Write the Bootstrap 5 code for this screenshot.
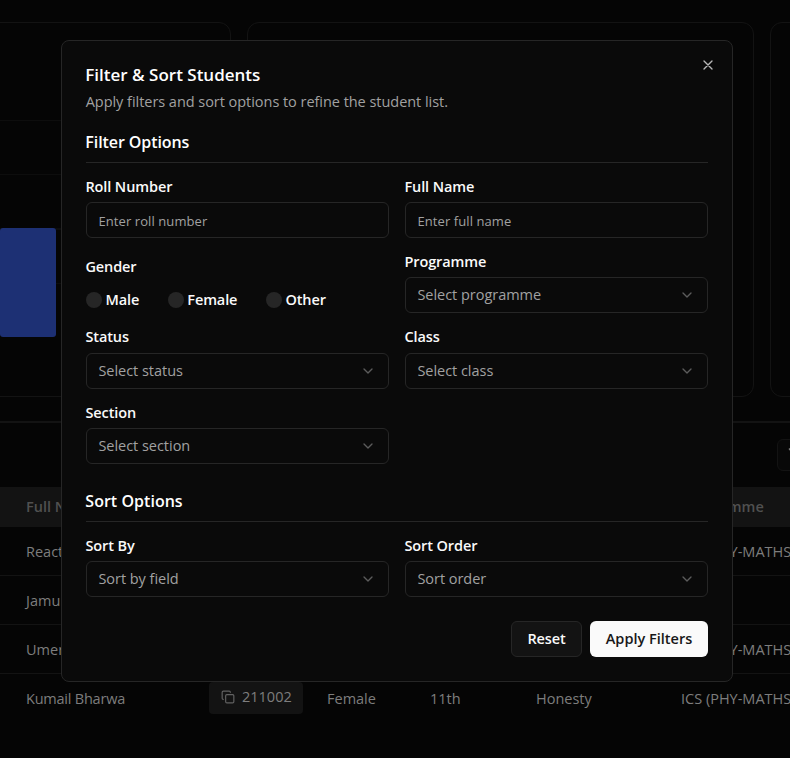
<!DOCTYPE html>
<html lang="en" data-bs-theme="dark">
<head>
<meta charset="utf-8">
<meta name="viewport" content="width=device-width, initial-scale=1">
<title>Students</title>
<link href="https://cdn.jsdelivr.net/npm/bootstrap@5.3.0/dist/css/bootstrap.min.css" rel="stylesheet">
<style>
body{background:#050505;font-family:"Open Sans","Noto Sans",sans-serif;font-size:14.5px;line-height:20px;color:#7d7d7d;height:758px;overflow:hidden}
.page{height:758px;overflow:hidden}
.stats{height:375px;margin:22px 0 0 -269px;width:1547px;gap:16px}
.panel{border:1px solid #131313;border-radius:12px}
.panel-a{width:500px}.panel-b{width:507px}.panel-c{width:508px}
.plot{margin-top:97px;height:217px;background:repeating-linear-gradient(#0d0d0d 0 1px,transparent 1px 54.25px)}
.bar-blue{width:56px;height:109px;margin-left:268px;background:#1d3074;border-radius:3px}
.lower{margin-top:24px;border-top:2px solid #131313;padding-top:16px;width:1200px}
.tool{width:110px;height:32px;margin-left:777px;margin-bottom:16px;padding-left:10px;border:1px solid #131313;border-radius:6px;background:#080808}
.students{width:1200px}
.students .line{display:grid;grid-template-columns:183px 118px 103px 106px 145px 300px;padding:1px 0 0 26px;height:49px;align-items:center;border-bottom:1px solid #131313;white-space:nowrap}
.students .line:last-child{border:0;padding-top:0}
.students .line.top{height:40px;padding-top:0;background:#131313;color:#505050;font-weight:600;border:0}
.tight{letter-spacing:-.22px}
.roll{width:94px;height:32px;background:#131313;border-radius:4px;margin-top:-2px;padding:0 0 2px 12px;gap:7px}
.dlg{width:672px;height:642px;margin:40px 0 0 61px;max-width:none}
.dlg .modal-content{height:642px;background:#0a0a0a;border:1px solid #262626;border-radius:8px;padding:24px;color:#fafafa}
.ttl{font-size:17px;font-weight:600;line-height:20px;margin:0;text-indent:-.7px}
.desc{color:#a1a1a1;margin:7px 0 0;letter-spacing:-.04px;text-indent:-.3px}
.sec{font-size:16px;font-weight:600;line-height:24px;margin:18px 0 15.4px;padding-bottom:8px;border-bottom:1px solid #262626;letter-spacing:-.08px;text-indent:-.7px}
.sec.second{margin-top:24.6px;letter-spacing:.03px}
.fields{display:grid;grid-template-columns:1fr 1fr;gap:16px}
.field{height:59.5px}
.lbl{display:block;height:23.5px;line-height:15px;font-weight:600;letter-spacing:-.1px;text-indent:-.6px}
.field:nth-child(-n+2) .lbl{padding-top:1px}
.gender{padding-top:5px}
.gender .lbl{height:31.5px}
.choice{gap:4px;margin-right:28.6px;letter-spacing:-.12px;line-height:20px}
.choice b{font-weight:600;margin-left:-.5px}
.box,.box:focus{height:36px;border:1px solid #262626;border-radius:6px;background:#0a0a0a;color:#a1a1a1;padding:0 12px 0 11.4px;font-size:14.5px;letter-spacing:-.03px;width:100%}
input.box,input.box:focus{font-size:13px;padding-top:2px;letter-spacing:.09px}
.box::placeholder{color:#a1a1a1;opacity:1}
.chev{stroke:#5c5c5c}
.dot{width:16px;height:16px;border-radius:50%;background:#262626}
.act{height:36px;border-radius:6px;font-size:14.5px;font-weight:600;padding:0;line-height:20px}
.act-r,.act-r:hover{width:71px;background:#131313;border:1px solid #262626;color:#fafafa;letter-spacing:-.15px}
.act-a,.act-a:hover{width:118px;background:#fafafa;color:#171717;border:0}
.x{position:absolute;right:16px;top:16px;width:16px;height:16px;padding:0;border:0;background:none;color:#b8b8b8;display:flex}
</style>
</head>
<body>
<svg class="d-none"><symbol id="chev" viewBox="0 0 24 24"><path d="m6 9 6 6 6-6" fill="none" stroke-width="2" stroke-linecap="round" stroke-linejoin="round"/></symbol></svg>

<div class="page d-flex flex-column align-items-start">
  <div class="stats d-flex flex-shrink-0">
    <div class="panel panel-a"><div class="plot d-flex align-items-end"><div class="bar-blue"></div></div></div>
    <div class="panel panel-b"></div>
    <div class="panel panel-c"></div>
  </div>
  <div class="lower flex-shrink-0">
    <div class="tool d-flex align-items-center"><svg width="16" height="16" viewBox="0 0 24 24" fill="none" stroke="#7d7d7d" stroke-width="2" stroke-linejoin="round"><path d="M22 3H2l8 9.46V19l4 2v-8.54L22 3z"/></svg></div>
    <div class="students">
      <div class="line top"><span>Full Name</span><span></span><span></span><span></span><span></span><span>Programme</span></div>
      <div class="line"><span>React</span><span></span><span></span><span></span><span></span><span>ICS (PHY-MATHS)</span></div>
      <div class="line"><span>Jamu</span></div>
      <div class="line"><span>Umer</span><span></span><span></span><span></span><span></span><span>ICS (PHY-MATHS)</span></div>
      <div class="line"><span class="tight">Kumail Bharwa</span>
        <div class="roll d-flex align-items-center"><svg width="14" height="14" viewBox="0 0 24 24" fill="none" stroke="#626262" stroke-width="2" stroke-linecap="round" stroke-linejoin="round"><rect x="8" y="8" width="14" height="14" rx="2"/><path d="M4 16c-1.1 0-2-.9-2-2V4c0-1.1.9-2 2-2h10c1.1 0 2 .9 2 2"/></svg>211002</div>
        <span>Female</span><span>11th</span><span>Honesty</span><span>ICS (PHY-MATHS)</span></div>
    </div>
  </div>
</div>

<div class="modal d-block overflow-hidden" tabindex="-1" role="dialog">
  <div class="modal-dialog dlg">
    <div class="modal-content">
      <button class="x" type="button" aria-label="Close"><svg width="16" height="16" viewBox="0 0 24 24" fill="none" stroke="currentColor" stroke-width="2" stroke-linecap="round"><path d="M18 6 6 18M6 6l12 12"/></svg></button>
      <h2 class="ttl">Filter &amp; Sort Students</h2>
      <p class="desc">Apply filters and sort options to refine the student list.</p>
      <h3 class="sec">Filter Options</h3>
      <div class="fields">
        <div class="field"><label class="lbl">Roll Number</label><input class="form-control box" placeholder="Enter roll number"></div>
        <div class="field"><label class="lbl">Full Name</label><input class="form-control box" placeholder="Enter full name"></div>
        <div class="field gender"><span class="lbl">Gender</span>
          <div class="d-flex align-items-center">
            <span class="choice d-flex align-items-center"><i class="dot"></i><b>Male</b></span>
            <span class="choice d-flex align-items-center"><i class="dot"></i><b>Female</b></span>
            <span class="choice d-flex align-items-center"><i class="dot"></i><b>Other</b></span>
          </div></div>
        <div class="field"><span class="lbl">Programme</span><div class="box d-flex align-items-center justify-content-between"><span>Select programme</span><svg class="chev" width="16" height="16"><use href="#chev"/></svg></div></div>
        <div class="field"><span class="lbl">Status</span><div class="box d-flex align-items-center justify-content-between"><span>Select status</span><svg class="chev" width="16" height="16"><use href="#chev"/></svg></div></div>
        <div class="field"><span class="lbl">Class</span><div class="box d-flex align-items-center justify-content-between"><span>Select class</span><svg class="chev" width="16" height="16"><use href="#chev"/></svg></div></div>
        <div class="field"><span class="lbl">Section</span><div class="box d-flex align-items-center justify-content-between"><span>Select section</span><svg class="chev" width="16" height="16"><use href="#chev"/></svg></div></div>
      </div>
      <h3 class="sec second">Sort Options</h3>
      <div class="fields">
        <div class="field"><span class="lbl">Sort By</span><div class="box d-flex align-items-center justify-content-between"><span>Sort by field</span><svg class="chev" width="16" height="16"><use href="#chev"/></svg></div></div>
        <div class="field"><span class="lbl">Sort Order</span><div class="box d-flex align-items-center justify-content-between"><span>Sort order</span><svg class="chev" width="16" height="16"><use href="#chev"/></svg></div></div>
      </div>
      <div class="d-flex justify-content-end gap-2 mt-4">
        <button class="btn act act-r" type="button">Reset</button>
        <button class="btn act act-a" type="button">Apply Filters</button>
      </div>
    </div>
  </div>
</div>
<script src="https://cdn.jsdelivr.net/npm/bootstrap@5.3.0/dist/js/bootstrap.bundle.min.js"></script>
</body>
</html>
